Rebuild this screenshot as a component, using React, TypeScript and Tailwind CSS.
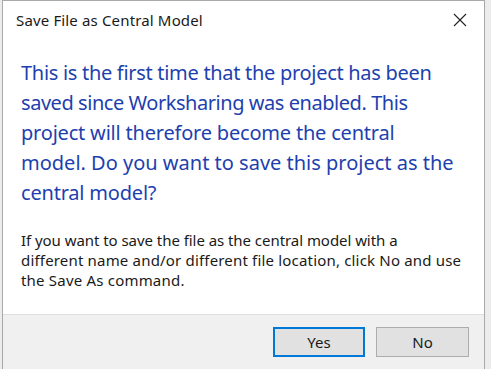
import React from "react";

export default function App() {
  const font = { fontFamily: '"Noto Sans", "Segoe UI", sans-serif' };
  return (
    <div className="w-[491px] h-[369px] bg-[#ececec] flex overflow-hidden" style={font}>
      <div className="ml-[2px] w-[483px] h-full flex flex-col bg-white border-l border-r border-t border-[#a9a9a9]">
        <div className="h-[42px] flex items-start justify-between pl-[13px] pr-[17px] pt-[9px]">
          <span className="text-[15px] leading-[20px] text-[#1a1a1a] tracking-[0.15px]">Save File as Central Model</span>
          <svg width="14" height="14" viewBox="0 0 14 14" className="mt-[3px]">
            <path d="M1 1 L13 13 M13 1 L1 13" stroke="#222" strokeWidth="1.1" />
          </svg>
        </div>
        <div className="flex-1 flex flex-col pl-[18px] pt-[15px]">
          <p className="text-[20px] leading-[30px] text-[#1e3fae] whitespace-nowrap">
            <span className="tracking-[-0.3px]">This is the first time that the project has been</span><br />
            <span className="tracking-[-0.45px]">saved since Worksharing was enabled. This</span><br />
            <span className="tracking-[-0.2px]">project will therefore become the central</span><br />
            <span className="tracking-[0px]">model. Do you want to save this project as the</span><br />
            <span className="tracking-[-0.2px]">central model?</span>
          </p>
          <p className="mt-[22px] text-[15px] leading-[20px] text-[#1a1a1a] whitespace-nowrap">
            <span className="tracking-[-0.05px]">If you want to save the file as the central model with a</span><br />
            <span className="tracking-[0.18px]">different name and/or different file location, click No and use</span><br />
            <span className="tracking-[0.2px]">the Save As command.</span>
          </p>
        </div>
        <div className="h-[55px] bg-[#f0f0f0] border-t border-[#dfdfdf] flex items-start justify-end gap-[11px] pt-[12px] pr-[15px]">
          <button className="w-[92px] h-[30px] bg-[#e1e1e1] border-2 border-[#0078d7] text-[15px] text-[#1a1a1a] flex items-center justify-center">Yes</button>
          <button className="w-[93px] h-[30px] bg-[#e1e1e1] border border-[#adadad] text-[15px] text-[#1a1a1a] flex items-center justify-center">No</button>
        </div>
      </div>
    </div>
  );
}
